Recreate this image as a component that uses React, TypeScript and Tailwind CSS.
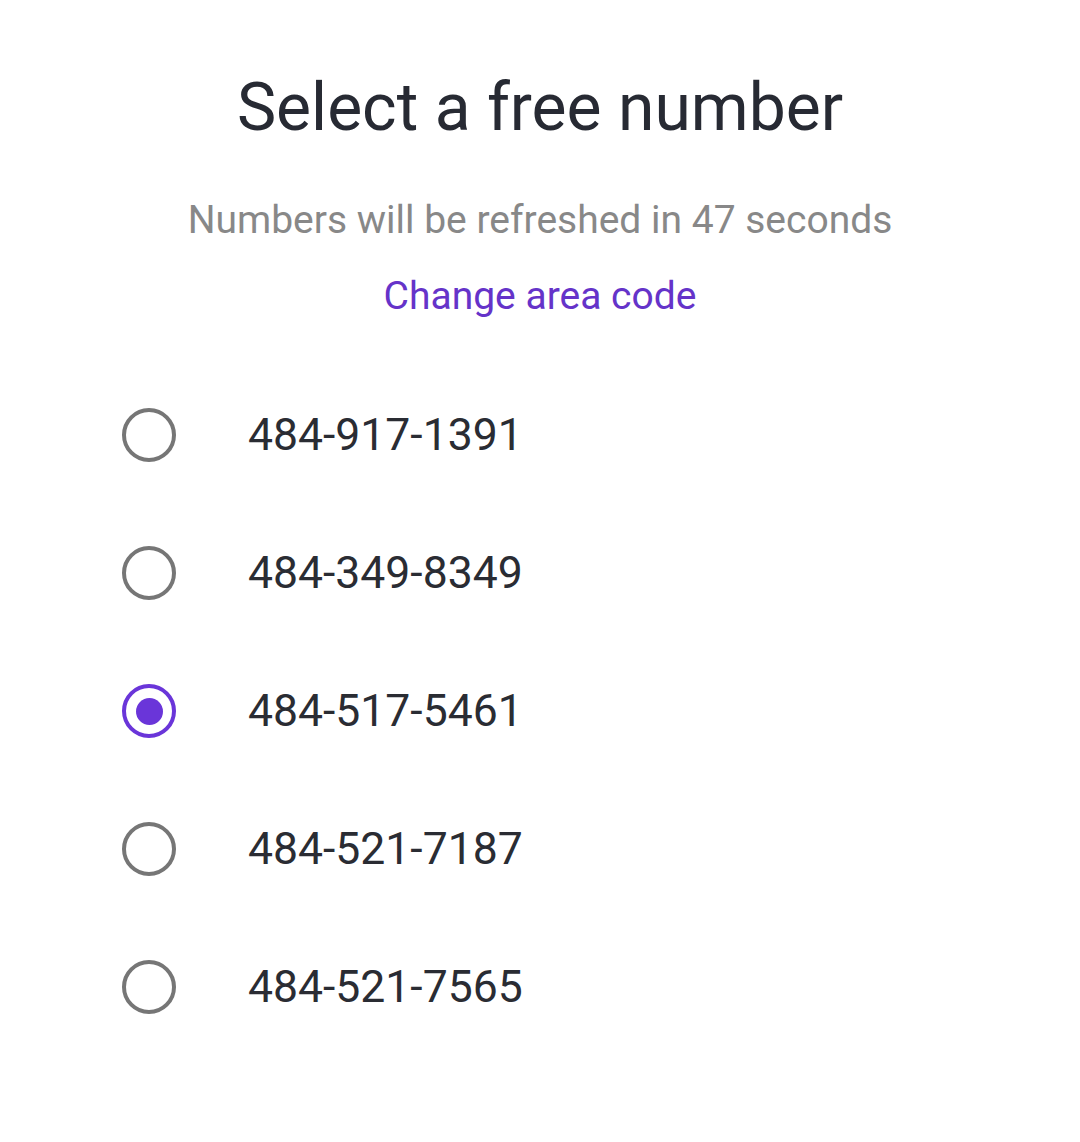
import React, { useState } from 'react';

const numbers = ['484-917-1391', '484-349-8349', '484-517-5461', '484-521-7187', '484-521-7565'];

function Radio({ checked }: { checked: boolean }) {
  return (
    <span
      className={`flex items-center justify-center w-[54px] h-[54px] rounded-full border-[4.5px] ${
        checked ? 'border-[#6a35d9]' : 'border-[#767676]'
      }`}>
      {checked && <span className="w-[27px] h-[27px] rounded-full bg-[#6a35d9]" />}
    </span>
  );
}

export default function App() {
  const [selected, setSelected] = useState(2);

  return (
    <div className="w-[1080px] h-[1142px] bg-white" style={{ fontFamily: 'Roboto, sans-serif' }}>
      <div className="flex flex-col items-center pt-[68px]">
        <h1 className="text-[66px] leading-[80px] text-[#272a33]">Select a free number</h1>
        <p className="mt-[50px] text-[39px] leading-[44px] text-[#888888]">
          Numbers will be refreshed in 47 seconds
        </p>
        <button className="mt-[32px] text-[39px] leading-[44px] text-[#6533c9]">Change area code</button>
      </div>
      <ul className="mt-[48px] pl-[122px]">
        {numbers.map((n, i) => (
          <li
            key={n}
            onClick={() => setSelected(i)}
            className="flex items-center h-[138px] cursor-pointer">
            <Radio checked={selected === i} />
            <span className="ml-[72px] text-[44.5px] text-[#2a2c33]">{n}</span>
          </li>
        ))}
      </ul>
    </div>
  );
}
